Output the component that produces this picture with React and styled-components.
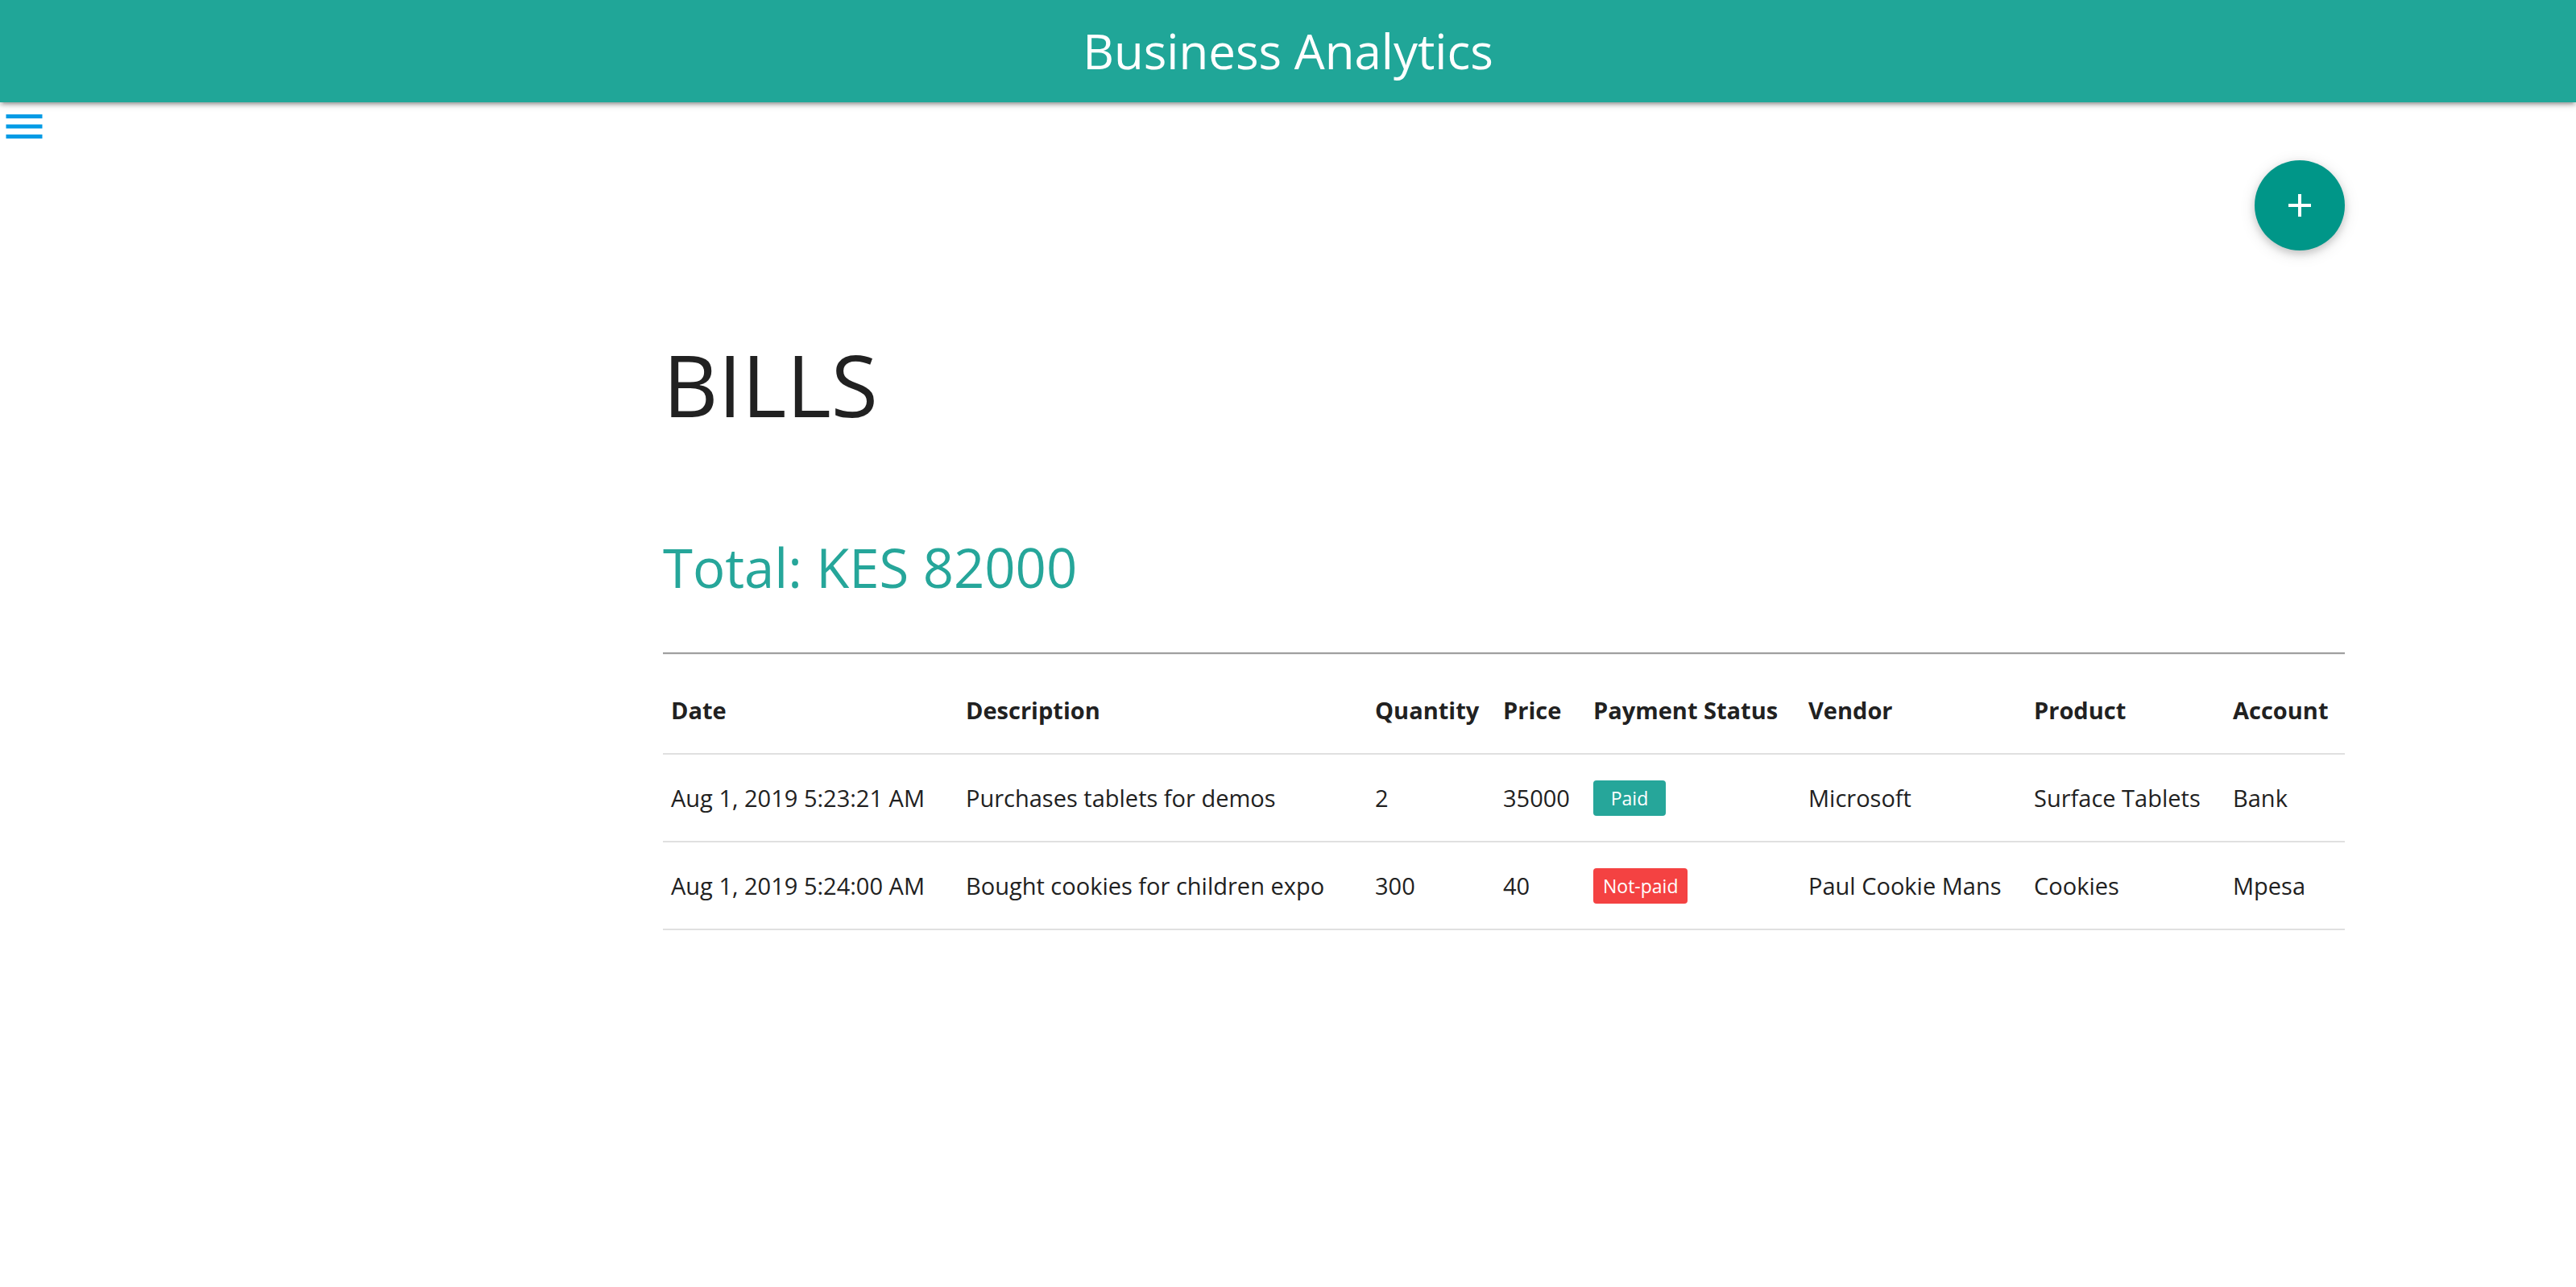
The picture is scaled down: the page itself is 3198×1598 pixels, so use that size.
import React from "react";
import styled, { createGlobalStyle } from "styled-components";

const bills = [
  {
    id: 1,
    date: "Aug 1, 2019 5:23:21 AM",
    description: "Purchases tablets for demos",
    quantity: 2,
    price: 35000,
    paid: true,
    vendor: "Microsoft",
    product: "Surface Tablets",
    account: "Bank",
  },
  {
    id: 2,
    date: "Aug 1, 2019 5:24:00 AM",
    description: "Bought cookies for children expo",
    quantity: 300,
    price: 40,
    paid: false,
    vendor: "Paul Cookie Mans",
    product: "Cookies",
    account: "Mpesa",
  },
];

const columns = [
  { label: "Date", width: 366 },
  { label: "Description", width: 508 },
  { label: "Quantity", width: 159 },
  { label: "Price", width: 112 },
  { label: "Payment Status", width: 267 },
  { label: "Vendor", width: 280 },
  { label: "Product", width: 247 },
  { label: "Account", width: 149 },
];

const App = () => {
  const total = bills.reduce((sum, b) => sum + b.quantity * b.price, 0);
  return (
    <>
      <GlobalStyle />
      <Nav>
        <Brand>Business Analytics</Brand>
      </Nav>
      <MenuButton aria-label="Menu">
        <svg width="60" height="60" viewBox="0 0 24 24" fill="currentColor">
          <path d="M3 18h18v-2H3v2zm0-5h18v-2H3v2zm0-7v2h18V6H3z" />
        </svg>
      </MenuButton>
      <Main>
        <Actions>
          <Fab aria-label="Add bill">
            <svg width="48" height="48" viewBox="0 0 24 24" fill="currentColor">
              <path d="M19 13h-6v6h-2v-6H5v-2h6V5h2v6h6v2z" />
            </svg>
          </Fab>
        </Actions>
        <Title>BILLS</Title>
        <Total>Total: KES {total}</Total>
        <Divider />
        <Table>
          <colgroup>
            {columns.map((c) => (
              <col key={c.label} style={{ width: c.width }} />
            ))}
          </colgroup>
          <thead>
            <tr>
              {columns.map((c) => (
                <th key={c.label}>{c.label}</th>
              ))}
            </tr>
          </thead>
          <tbody>
            {bills.map((b) => (
              <tr key={b.id}>
                <td>{b.date}</td>
                <td>{b.description}</td>
                <td>{b.quantity}</td>
                <td>{b.price}</td>
                <td>
                  <Badge $paid={b.paid}>{b.paid ? "Paid" : "Not-paid"}</Badge>
                </td>
                <td>{b.vendor}</td>
                <td>{b.product}</td>
                <td>{b.account}</td>
              </tr>
            ))}
          </tbody>
        </Table>
      </Main>
    </>
  );
};

const GlobalStyle = createGlobalStyle`
  body {
    margin: 0;
    font-family: "Open Sans", "Noto Sans", sans-serif;
    color: #212121;
    background: #fff;
  }
`;

const Nav = styled.nav`
  height: 127px;
  background: #20a698;
  display: flex;
  align-items: center;
  justify-content: center;
  box-shadow: 0 4px 4px 0 rgba(0, 0, 0, 0.14), 0 6px 2px -4px rgba(0, 0, 0, 0.12),
    0 2px 10px 0 rgba(0, 0, 0, 0.2);
  position: relative;
  z-index: 1;
`;

const Brand = styled.a`
  color: #fff;
  font-size: 60px;
  line-height: 1;
  margin-top: -2px;
`;

const MenuButton = styled.a`
  display: block;
  width: 60px;
  height: 60px;
  color: #039be5;
  svg {
    display: block;
  }
`;

const Main = styled.main`
  margin-left: 823px;
  width: 2088px;
`;

const Actions = styled.div`
  display: flex;
  justify-content: flex-end;
  margin-top: 12px;
`;

const Fab = styled.button`
  width: 112px;
  height: 112px;
  border-radius: 50%;
  border: none;
  padding: 0;
  background: #009688;
  color: #fff;
  display: flex;
  align-items: center;
  justify-content: center;
  box-shadow: 0 4px 10px 0 rgba(0, 0, 0, 0.16), 0 4px 20px 0 rgba(0, 0, 0, 0.12);
  cursor: pointer;
`;

const Title = styled.h2`
  margin: 113px 0 0;
  font-size: 106px;
  font-weight: 400;
  line-height: 1;
`;

const Total = styled.h4`
  margin: 141px 0 0;
  font-size: 67px;
  font-weight: 400;
  line-height: 1;
  color: #26a69a;
`;

const Divider = styled.div`
  margin-top: 72px;
  border-top: 2px solid #9e9e9e;
  border-bottom: 1px solid #ececec;
`;

const Table = styled.table`
  margin-top: 15px;
  width: 100%;
  table-layout: fixed;
  border-collapse: collapse;
  font-size: 29px;

  tr {
    border-bottom: 2px solid #e0e0e0;
  }

  th,
  td {
    height: 107px;
    padding: 0 10px;
    text-align: left;
    vertical-align: middle;
    white-space: nowrap;
  }

  th {
    font-weight: 700;
  }
`;

const Badge = styled.span`
  display: inline-block;
  box-sizing: border-box;
  min-width: 90px;
  height: 44px;
  padding: 0 12px;
  line-height: 44px;
  font-size: 23px;
  text-align: center;
  color: #fff;
  border-radius: 4px;
  background: ${(p) => (p.$paid ? "#26a69a" : "#f44242")};
  vertical-align: middle;
`;

export default App;
